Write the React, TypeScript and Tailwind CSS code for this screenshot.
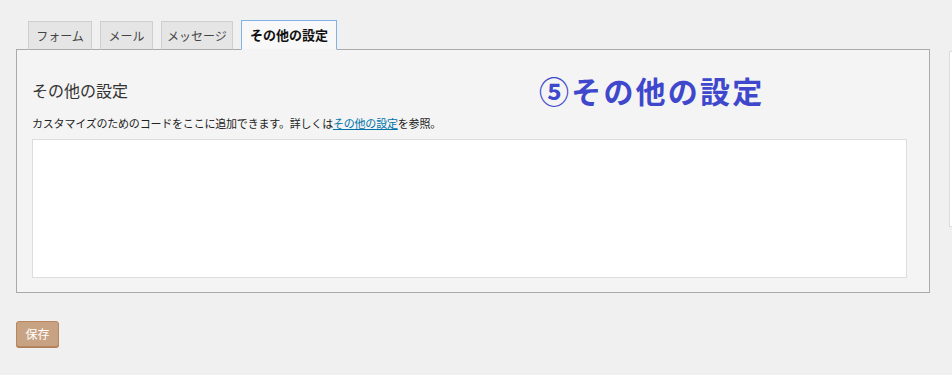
import React from 'react';

const font = { fontFamily: '"Noto Sans CJK JP", "Noto Sans", sans-serif' };

const tabs = [
  { label: 'フォーム', w: 'w-[64px]' },
  { label: 'メール', w: 'w-[53px]' },
  { label: 'メッセージ', w: 'w-[72px]' },
];

export default function App() {
  return (
    <div
      className="relative w-[952px] h-[375px] overflow-hidden bg-[#f0f0f0] text-[#222]"
      style={font}
    >
      {/* Tabs */}
      <div className="flex items-end gap-2 pl-[28px] pt-[20px] relative z-10">
        {tabs.map((t) => (
          <div
            key={t.label}
            className={`${t.w} h-[29px] -mb-px flex items-center justify-center border border-[#cfcfcf] border-b-[#aaa] bg-[#e5e5e5] text-[12px] text-[#444]`}
          >
            {t.label}
          </div>
        ))}
        <div className="w-[96px] h-[30px] -mb-px flex items-center justify-center border border-[#7fb2e5] border-b-[#f4f4f4] bg-[#f8f8f8] text-[13px] font-bold text-[#111]">
          その他の設定
        </div>
      </div>

      {/* Panel row */}
      <div className="flex gap-[19px] pl-[16px]">
        <div className="w-[914px] h-[244px] shrink-0 border border-[#aaa] bg-[#f4f4f4] pl-[15px] pr-[22px] pt-[28px] pb-[14px] flex flex-col">
          <h2 className="text-[16px] leading-[24px] text-[#333]">その他の設定</h2>
          <p className="mt-[13px] text-[11px] leading-[16px] tracking-[-0.2px] text-[#222]">
            カスタマイズのためのコードをここに追加できます。詳しくは
            <a className="text-[#0073aa] underline">その他の設定</a>を参照。
          </p>
          <div className="mt-[8px] flex-1 border border-[#dddddd] bg-white" />
        </div>
        <div className="mt-[2px] w-[40px] h-[176px] shrink-0 border border-[#ddd] bg-white" />
      </div>

      {/* Annotation */}
      <div className="absolute left-[539px] top-[70px] text-[30px] leading-[40px] font-bold text-[#3f48cc] tracking-[2.2px]">
        ⑤その他の設定
      </div>

      {/* Save */}
      <div className="pl-[16px] pt-[27px]">
        <button className="w-[43px] h-[26px] rounded-[3px] border border-[#b8875e] bg-[#c7a384] text-[12px] text-white shadow-[0_1px_0_#b07f57]">
          保存
        </button>
      </div>
    </div>
  );
}
